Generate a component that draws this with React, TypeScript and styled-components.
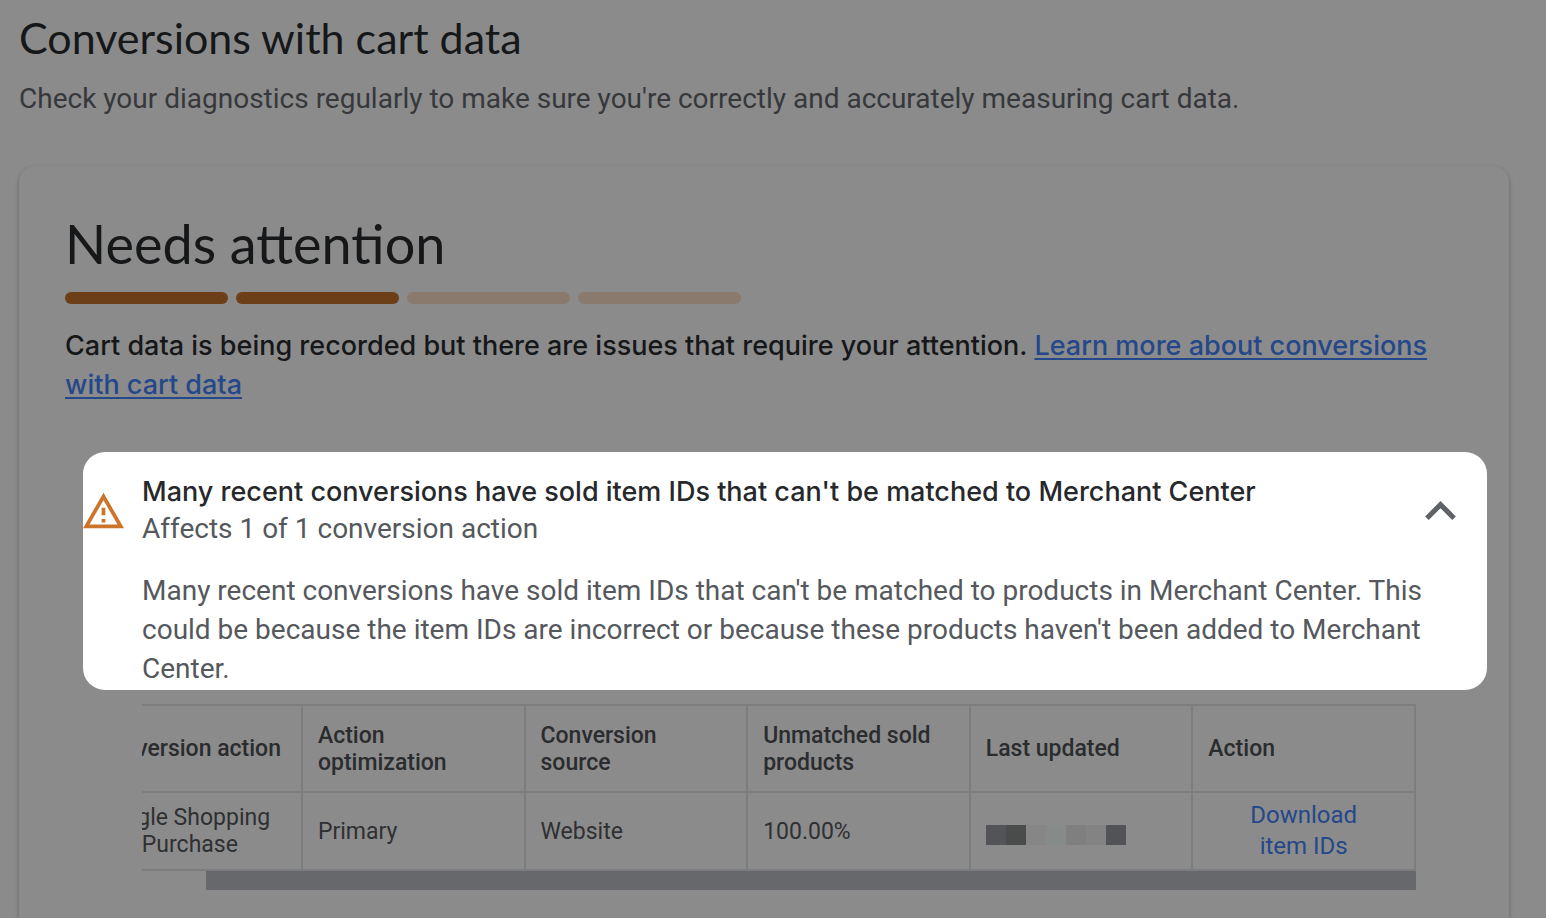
import React from 'react';
import styled, { createGlobalStyle } from 'styled-components';

const c = {
  page: '#8b8b8b',
  ink: '#161719',
  muted: '#36383b',
  link: '#24488a',
  line: '#7c7d7f',
  solid: '#6d3f18',
  faint: '#8a7a6e',
  thumb: '#67686c',
};

const GlobalStyle = createGlobalStyle`
  * { box-sizing: border-box; }
  body { margin: 0; background: ${c.page}; font-family: Roboto, sans-serif; color: ${c.muted}; }
  h1, h2, h3, p { margin: 0; }
`;

const Page = styled.main`
  display: flex;
  flex-direction: column;
  min-height: 100vh;
  padding: 10px 37px 0 19px;
`;

const Title = styled.h1`
  font: 400 43px/56px Lato, sans-serif;
  color: ${c.ink};
`;

const Subtitle = styled.p`
  margin-top: 14px;
  font-size: 28px;
  line-height: 38px;
`;

const Card = styled.section`
  flex: 1;
  margin-top: 48px;
  padding: 42px 22px 28px 46px;
  border-radius: 16px 16px 0 0;
  box-shadow: 0 2px 4px rgba(0, 0, 0, 0.3);
`;

const Status = styled.h2`
  font: 400 54px/72px Lato, sans-serif;
  color: ${c.ink};
`;

const Progress = styled.div`
  display: flex;
  gap: 8px;
  margin-top: 12px;
`;

const Step = styled.span<{ $done?: boolean }>`
  width: 163px;
  height: 12px;
  border-radius: 6px;
  background: ${(p) => (p.$done ? c.solid : c.faint)};
`;

const Summary = styled.p`
  margin-top: 22px;
  font: 500 27px/39px Inter, sans-serif;
  color: ${c.ink};
`;

const Link = styled.a`
  color: ${c.link};
  text-decoration: underline;
  text-decoration-thickness: 2px;
  text-underline-offset: 3px;
`;

const Issue = styled.article`
  display: flex;
  align-items: flex-start;
  gap: 18px;
  margin: 48px 0 0 18px;
  padding: 20px 31px 2px 0;
  border-radius: 22px;
  background: #fff;
  color: #55585d;
`;

const WarningIcon = styled.svg`
  flex: none;
  width: 41px;
  height: 37px;
  margin-top: 20px;
  fill: #cc7429;
`;

const IssueBody = styled.div`
  flex: 1;
`;

const IssueHead = styled.header`
  display: flex;
  align-items: center;
  justify-content: space-between;
`;

const IssueTitle = styled.h3`
  font: 500 27px/39px Inter, sans-serif;
  color: #26282b;
`;

const Affected = styled.p`
  font-size: 28px;
  line-height: 36px;
`;

const Explanation = styled.p`
  margin-top: 24px;
  font-size: 28px;
  line-height: 39px;
`;

const Collapse = styled.button`
  display: flex;
  padding: 2px 0 0;
  border: 0;
  background: none;
  cursor: pointer;

  svg {
    width: 31px;
    height: 19px;
    fill: #5f6368;
  }
`;

const TableScroller = styled.div`
  display: flex;
  flex-direction: column;
  align-items: flex-end;
  margin: 14px 71px 0 77px;
  overflow: hidden;
`;

const Table = styled.table`
  width: 105%;
  table-layout: fixed;
  border-collapse: collapse;
  font-size: 23px;
  line-height: 27px;
  text-align: left;

  th, td {
    border: 2px solid ${c.line};
    padding: 0 15px;
  }
  th {
    height: 87px;
    font-weight: 500;
    color: #2a2c2e;
  }
  td {
    height: 78px;
    color: #2e3032;
  }
`;

const Download = styled.a`
  display: block;
  padding: 0 40px;
  font-size: 24px;
  line-height: 31px;
  text-align: center;
  text-decoration: none;
  color: ${c.link};
`;

const Redacted = styled.span`
  display: inline-flex;
  vertical-align: text-bottom;
`;

const Block = styled.i<{ $tone: string }>`
  width: 20px;
  height: 20px;
  background: ${(p) => p.$tone};
`;

const Thumb = styled.div`
  width: 95%;
  height: 19px;
  background: ${c.thumb};
`;

const columns = ['Conversion action', 'Action optimization', 'Conversion source', 'Unmatched sold products', 'Last updated', 'Action'];
const tones = ['#525457', '#4a4b4b', '#868686', '#868a88', '#7f7f7f', '#838383', '#525356'];

export default function App() {
  return (
    <Page>
      <GlobalStyle />
      <Title>Conversions with cart data</Title>
      <Subtitle>Check your diagnostics regularly to make sure you're correctly and accurately measuring cart data.</Subtitle>
      <Card>
        <Status>Needs attention</Status>
        <Progress>
          <Step $done />
          <Step $done />
          <Step />
          <Step />
        </Progress>
        <Summary>
          Cart data is being recorded but there are issues that require your attention.{' '}
          <Link href="#learn-more">Learn more about conversions with cart data</Link>
        </Summary>
        <Issue>
          <WarningIcon viewBox="1 2 22 19" aria-hidden="true">
            <path d="M12 5.99L19.53 19H4.47L12 5.99M12 2L1 21h22L12 2zm1 14h-2v2h2v-2zm0-6h-2v4h2v-4z" />
          </WarningIcon>
          <IssueBody>
            <IssueHead>
              <div>
                <IssueTitle>Many recent conversions have sold item IDs that can't be matched to Merchant Center</IssueTitle>
                <Affected>Affects 1 of 1 conversion action</Affected>
              </div>
              <Collapse aria-label="Collapse issue">
                <svg viewBox="6 8 12 7.41">
                  <path d="M12 8l-6 6 1.41 1.41L12 10.83l4.59 4.58L18 14z" />
                </svg>
              </Collapse>
            </IssueHead>
            <Explanation>
              Many recent conversions have sold item IDs that can't be matched to products in Merchant Center. This could be
              because the item IDs are incorrect or because these products haven't been added to Merchant Center.
            </Explanation>
          </IssueBody>
        </Issue>
        <TableScroller>
          <Table>
            <thead>
              <tr>
                {columns.map((name) => (
                  <th key={name} scope="col">{name}</th>
                ))}
              </tr>
            </thead>
            <tbody>
              <tr>
                <td>Google Shopping App Purchase</td>
                <td>Primary</td>
                <td>Website</td>
                <td>100.00%</td>
                <td>
                  <Redacted>
                    {tones.map((tone, i) => (
                      <Block key={i} $tone={tone} />
                    ))}
                  </Redacted>
                </td>
                <td>
                  <Download href="#download">Download item IDs</Download>
                </td>
              </tr>
            </tbody>
          </Table>
          <Thumb />
        </TableScroller>
      </Card>
    </Page>
  );
}
